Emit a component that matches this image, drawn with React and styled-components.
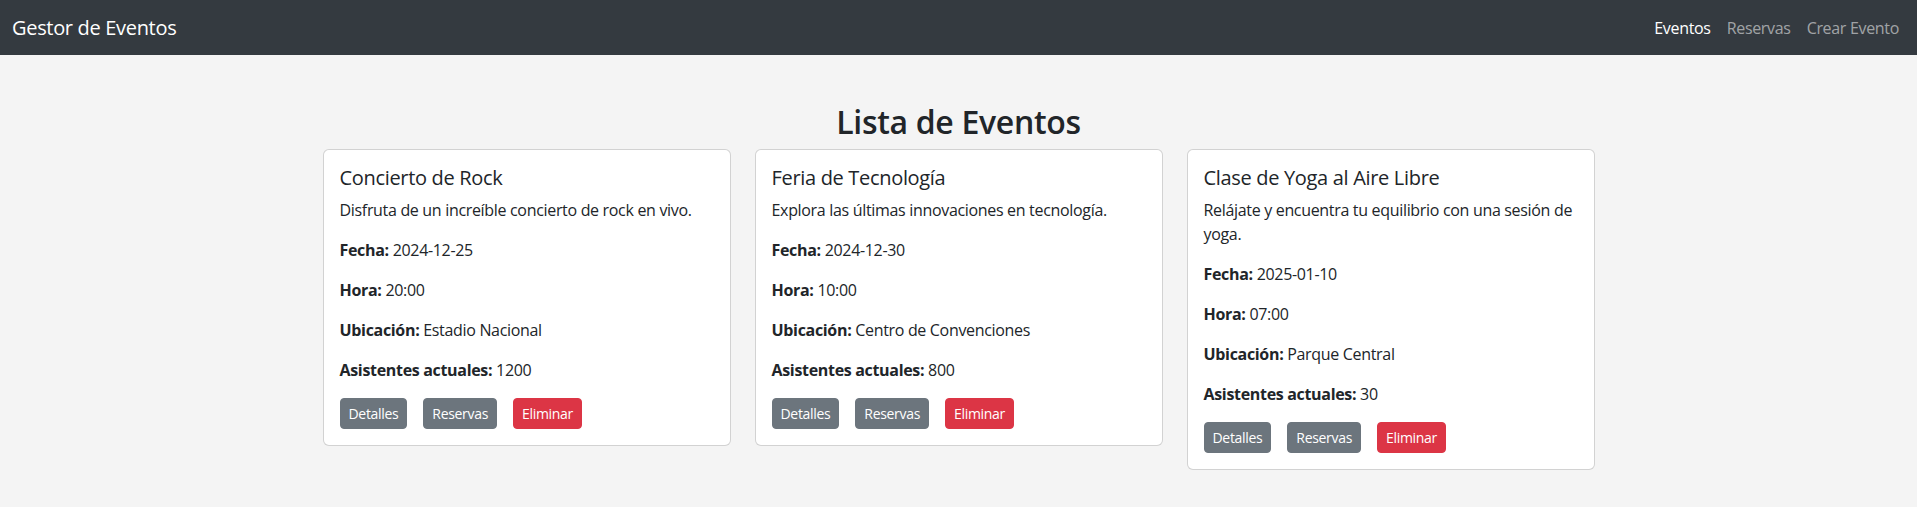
import React from "react";
import styled, { createGlobalStyle } from "styled-components";

const events = [
  {
    id: 1,
    title: "Concierto de Rock",
    description: "Disfruta de un increíble concierto de rock en vivo.",
    date: "2024-12-25",
    time: "20:00",
    place: "Estadio Nacional",
    attendees: 1200,
  },
  {
    id: 2,
    title: "Feria de Tecnología",
    description: "Explora las últimas innovaciones en tecnología.",
    date: "2024-12-30",
    time: "10:00",
    place: "Centro de Convenciones",
    attendees: 800,
  },
  {
    id: 3,
    title: "Clase de Yoga al Aire Libre",
    description: "Relájate y encuentra tu equilibrio con una sesión de yoga.",
    date: "2025-01-10",
    time: "07:00",
    place: "Parque Central",
    attendees: 30,
  },
];

const App = () => {
  return (
    <>
      <GlobalStyle />
      <Navbar>
        <Brand href="#">Gestor de Eventos</Brand>
        <NavLinks>
          <NavLink href="#" $active>
            Eventos
          </NavLink>
          <NavLink href="#">Reservas</NavLink>
          <NavLink href="#">Crear Evento</NavLink>
        </NavLinks>
      </Navbar>
      <Container>
        <Title>Lista de Eventos</Title>
        <CardGrid>
          {events.map((ev) => (
            <Card key={ev.id}>
              <CardTitle>{ev.title}</CardTitle>
              <Description>{ev.description}</Description>
              <Info>
                <strong>Fecha:</strong> {ev.date}
              </Info>
              <Info>
                <strong>Hora:</strong> {ev.time}
              </Info>
              <Info>
                <strong>Ubicación:</strong> {ev.place}
              </Info>
              <Info>
                <strong>Asistentes actuales:</strong> {ev.attendees}
              </Info>
              <Actions>
                <Button>Detalles</Button>
                <Button>Reservas</Button>
                <Button $danger>Eliminar</Button>
              </Actions>
            </Card>
          ))}
        </CardGrid>
      </Container>
    </>
  );
};
export default App;

const GlobalStyle = createGlobalStyle`
  body {
    margin: 0;
    background: #f4f4f4;
    color: #212529;
    font-family: "Open Sans", "Noto Sans", sans-serif;
    font-size: 16px;
    line-height: 1.5;
    letter-spacing: -0.02em;
  }
`;

const Navbar = styled.nav`
  display: flex;
  align-items: center;
  justify-content: space-between;
  height: 55px;
  padding: 0 10px 0 12px;
  background: #343a40;
`;
const Brand = styled.a`
  color: #fff;
  font-size: 20px;
  text-decoration: none;
`;
const NavLinks = styled.div`
  display: flex;
`;
const NavLink = styled.a`
  padding: 8px;
  color: ${(p) => (p.$active ? "#fff" : "rgba(255, 255, 255, 0.55)")};
  text-decoration: none;
`;
const Container = styled.div`
  padding-top: 48px;
`;
const Title = styled.h2`
  margin: 0 0 8px;
  text-align: center;
  font-size: 32px;
  font-weight: 600;
  line-height: 1.2;
`;
const CardGrid = styled.div`
  display: grid;
  grid-template-columns: repeat(3, 408px);
  gap: 24px;
  justify-content: center;
  align-items: start;
`;
const Card = styled.div`
  padding: 16px;
  background: #fff;
  border: 1px solid rgba(0, 0, 0, 0.175);
  border-radius: 6px;
`;
const CardTitle = styled.h5`
  margin: 0 0 8px;
  font-size: 20px;
  font-weight: 500;
  line-height: 1.2;
`;
const Description = styled.p`
  margin: 0 0 16px;
`;
const Info = styled.p`
  margin: 0 0 16px;
  strong {
    font-weight: 700;
  }
`;
const Actions = styled.div`
  display: flex;
  gap: 16px;
`;
const Button = styled.button`
  padding: 4px 8px;
  font-family: inherit;
  font-size: 14px;
  line-height: 1.5;
  letter-spacing: inherit;
  color: #fff;
  background: ${(p) => (p.$danger ? "#dc3545" : "#6c757d")};
  border: 1px solid ${(p) => (p.$danger ? "#dc3545" : "#6c757d")};
  border-radius: 4px;
`;
